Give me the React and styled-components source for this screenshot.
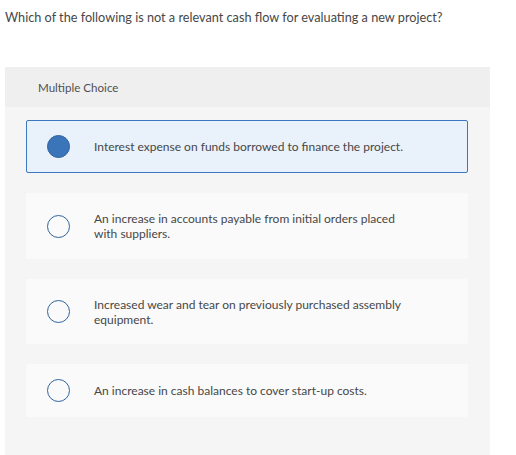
import React from "react";
import styled, { createGlobalStyle } from "styled-components";

const Global = createGlobalStyle`
  html, body { margin: 0; padding: 0; background: #ffffff; }
  body { font-family: "Lato", "Liberation Sans", sans-serif; color: #333; }
`;

const Page = styled.div`
  width: 516px;
  height: 455px;
  overflow: hidden;
  display: flex;
  flex-direction: column;
`;

const Question = styled.p`
  margin: 0;
  padding: 9px 0 0 5px;
  height: 67px;
  box-sizing: border-box;
  font-size: 12.7px;
  line-height: 16px;
  color: #474747;
`;

const Panel = styled.section`
  width: 485px;
  margin-left: 5px;
  flex: 1;
  background: #f5f5f5;
  display: flex;
  flex-direction: column;
`;

const PanelHeader = styled.div`
  height: 40px;
  background: #efefef;
  display: flex;
  align-items: center;
  padding-left: 33px;
  font-size: 11.6px;
  color: #4f4f4f;
`;

const Options = styled.div`
  display: flex;
  flex-direction: column;
  gap: 20px;
  padding: 13px 22px 0 21px;
`;

const Option = styled.label`
  display: flex;
  align-items: center;
  min-height: ${(p) => p.$h}px;
  box-sizing: border-box;
  padding: 0 20px;
  border-radius: 2px;
  background: ${(p) => (p.$selected ? "#e9f1fb" : "#fafafa")};
  border: 1px solid ${(p) => (p.$selected ? "#3c77bf" : "transparent")};
  cursor: pointer;
`;

const Radio = styled.span`
  flex: none;
  width: 23px;
  height: 23px;
  box-sizing: border-box;
  border-radius: 50%;
  border: 1.5px solid #2f63a1;
  background: ${(p) => (p.$selected ? "#3a74b9" : "transparent")};
  margin-right: 24px;
`;

const OptionText = styled.span`
  font-size: 12px;
  line-height: 15px;
  color: #474747;
  max-width: 318px;
`;

const options = [
  { text: "Interest expense on funds borrowed to finance the project.", h: 53, selected: true },
  { text: "An increase in accounts payable from initial orders placed with suppliers.", h: 66 },
  { text: "Increased wear and tear on previously purchased assembly equipment.", h: 65 },
  { text: "An increase in cash balances to cover start-up costs.", h: 53 },
];

export default function App() {
  return (
    <Page>
      <Global />
      <Question>Which of the following is not a relevant cash flow for evaluating a new project?</Question>
      <Panel>
        <PanelHeader>Multiple Choice</PanelHeader>
        <Options>
          {options.map((o, i) => (
            <Option key={i} $selected={o.selected} $h={o.h}>
              <Radio $selected={o.selected} />
              <OptionText>{o.text}</OptionText>
            </Option>
          ))}
        </Options>
      </Panel>
    </Page>
  );
}
